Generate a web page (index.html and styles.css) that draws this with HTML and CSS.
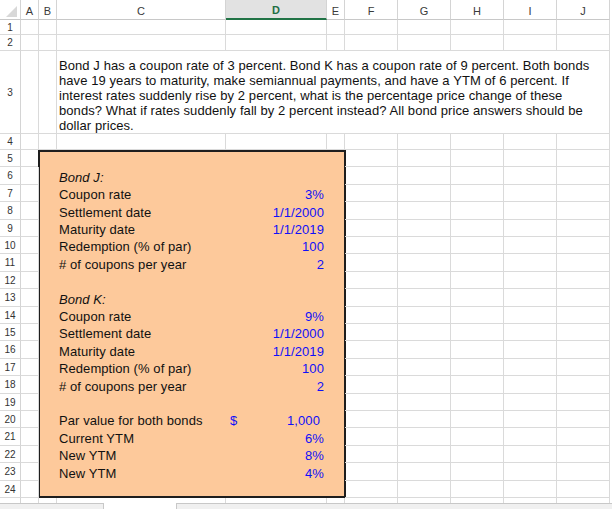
FILE: index.html
```html
<!DOCTYPE html>
<html>
<head>
<meta charset="utf-8">
<title>Bond problem</title>
<link rel="stylesheet" href="styles.css">
</head>
<body>
<div class="app">
  <div class="sheet">
    <div class="corner"><svg width="11" height="11" viewBox="0 0 11 11"><polygon points="11,0 11,11 0,11" fill="#d8d8d8"/></svg></div>
    <div class="ch">A</div><div class="ch">B</div><div class="ch">C</div><div class="ch sel">D</div><div class="ch">E</div><div class="ch">F</div><div class="ch">G</div><div class="ch">H</div><div class="ch">I</div><div class="ch">J</div>

    <div class="rh">1</div><div class="c"></div><div class="c"></div><div class="c"></div><div class="c"></div><div class="c"></div><div class="c"></div><div class="c"></div><div class="c"></div><div class="c"></div><div class="c"></div>
    <div class="rh">2</div><div class="c"></div><div class="c"></div><div class="c"></div><div class="c"></div><div class="c"></div><div class="c"></div><div class="c"></div><div class="c"></div><div class="c"></div><div class="c"></div>
    <div class="rh">3</div><div class="c"></div><div class="c"></div>
    <div class="c merged">
      <span>Bond J has a coupon rate of 3 percent. Bond K has a coupon rate of 9 percent. Both bonds</span>
      <span>have 19 years to maturity, make semiannual payments, and have a YTM of 6 percent. If</span>
      <span>interest rates suddenly rise by 2 percent, what is the percentage price change of these</span>
      <span>bonds? What if rates suddenly fall by 2 percent instead? All bond price answers should be</span>
      <span>dollar prices.</span>
    </div>
    <div class="rh">4</div><div class="c"></div><div class="c"></div><div class="c"></div><div class="c"></div><div class="c"></div><div class="c"></div><div class="c"></div><div class="c"></div><div class="c"></div><div class="c"></div>

    <div class="rh">5</div><div class="c"></div>
    <div class="box">
      <div class="row"></div>
      <div class="row"><span class="lab it">Bond J:</span></div>
      <div class="row"><span class="lab">Coupon rate</span><span class="val">3%</span></div>
      <div class="row"><span class="lab">Settlement date</span><span class="val">1/1/2000</span></div>
      <div class="row"><span class="lab">Maturity date</span><span class="val">1/1/2019</span></div>
      <div class="row"><span class="lab">Redemption (% of par)</span><span class="val">100</span></div>
      <div class="row"><span class="lab"># of coupons per year</span><span class="val">2</span></div>
      <div class="row"></div>
      <div class="row"><span class="lab it">Bond K:</span></div>
      <div class="row"><span class="lab">Coupon rate</span><span class="val">9%</span></div>
      <div class="row"><span class="lab">Settlement date</span><span class="val">1/1/2000</span></div>
      <div class="row"><span class="lab">Maturity date</span><span class="val">1/1/2019</span></div>
      <div class="row"><span class="lab">Redemption (% of par)</span><span class="val">100</span></div>
      <div class="row"><span class="lab"># of coupons per year</span><span class="val">2</span></div>
      <div class="row"></div>
      <div class="row"><span class="lab">Par value for both bonds</span><span class="val acct"><span>$</span><span>1,000</span></span></div>
      <div class="row"><span class="lab">Current YTM</span><span class="val">6%</span></div>
      <div class="row"><span class="lab">New YTM</span><span class="val">8%</span></div>
      <div class="row"><span class="lab">New YTM</span><span class="val">4%</span></div>
      <div class="row"></div>
    </div>
    <div class="c"></div><div class="c"></div><div class="c"></div><div class="c"></div><div class="c"></div>

    <div class="rh">6</div><div class="c"></div><div class="c"></div><div class="c"></div><div class="c"></div><div class="c"></div><div class="c"></div>
    <div class="rh">7</div><div class="c"></div><div class="c"></div><div class="c"></div><div class="c"></div><div class="c"></div><div class="c"></div>
    <div class="rh">8</div><div class="c"></div><div class="c"></div><div class="c"></div><div class="c"></div><div class="c"></div><div class="c"></div>
    <div class="rh">9</div><div class="c"></div><div class="c"></div><div class="c"></div><div class="c"></div><div class="c"></div><div class="c"></div>
    <div class="rh">10</div><div class="c"></div><div class="c"></div><div class="c"></div><div class="c"></div><div class="c"></div><div class="c"></div>
    <div class="rh">11</div><div class="c"></div><div class="c"></div><div class="c"></div><div class="c"></div><div class="c"></div><div class="c"></div>
    <div class="rh">12</div><div class="c"></div><div class="c"></div><div class="c"></div><div class="c"></div><div class="c"></div><div class="c"></div>
    <div class="rh">13</div><div class="c"></div><div class="c"></div><div class="c"></div><div class="c"></div><div class="c"></div><div class="c"></div>
    <div class="rh">14</div><div class="c"></div><div class="c"></div><div class="c"></div><div class="c"></div><div class="c"></div><div class="c"></div>
    <div class="rh">15</div><div class="c"></div><div class="c"></div><div class="c"></div><div class="c"></div><div class="c"></div><div class="c"></div>
    <div class="rh">16</div><div class="c"></div><div class="c"></div><div class="c"></div><div class="c"></div><div class="c"></div><div class="c"></div>
    <div class="rh">17</div><div class="c"></div><div class="c"></div><div class="c"></div><div class="c"></div><div class="c"></div><div class="c"></div>
    <div class="rh">18</div><div class="c"></div><div class="c"></div><div class="c"></div><div class="c"></div><div class="c"></div><div class="c"></div>
    <div class="rh">19</div><div class="c"></div><div class="c"></div><div class="c"></div><div class="c"></div><div class="c"></div><div class="c"></div>
    <div class="rh">20</div><div class="c"></div><div class="c"></div><div class="c"></div><div class="c"></div><div class="c"></div><div class="c"></div>
    <div class="rh">21</div><div class="c"></div><div class="c"></div><div class="c"></div><div class="c"></div><div class="c"></div><div class="c"></div>
    <div class="rh">22</div><div class="c"></div><div class="c"></div><div class="c"></div><div class="c"></div><div class="c"></div><div class="c"></div>
    <div class="rh">23</div><div class="c"></div><div class="c"></div><div class="c"></div><div class="c"></div><div class="c"></div><div class="c"></div>
    <div class="rh">24</div><div class="c"></div><div class="c"></div><div class="c"></div><div class="c"></div><div class="c"></div><div class="c"></div>
    <div class="rh"></div><div class="c"></div><div class="c"></div><div class="c"></div><div class="c"></div><div class="c"></div><div class="c"></div><div class="c"></div><div class="c"></div><div class="c"></div><div class="c"></div>
  </div>
  <div class="tabs"><div class="t1"></div><div class="t2"></div><div class="t3"></div></div>
</div>
</body>
</html>
```
FILE: styles.css
```css
* { box-sizing: border-box; margin: 0; padding: 0; }
html, body { width: 612px; height: 509px; overflow: hidden; background: #fff; }
body { font-family: "Liberation Sans", Arial, sans-serif; color: #000; }

.app { display: flex; flex-direction: column; height: 509px; }

.sheet {
  height: 503px;
  overflow: hidden;
  display: grid;
  grid-template-columns: 21px 18px 18px 169px 101px 18px 53px 53px 53px 53px 53px;
  grid-template-rows: 20px 15px 16px 83px 16px
    17px 18px 17px 18px 17px 17px 18px 17px 18px 17px
    17px 18px 17px 18px 17px 17px 18px 17px 18px 17px
    20px;
}

.c { border-right: 1px solid #dadada; border-bottom: 1px solid #dadada; }

.corner {
  border-right: 1px solid #d4d4d4;
  border-bottom: 1px solid #c8c8c8;
  display: flex;
  align-items: flex-end;
  justify-content: flex-end;
  padding: 0 3px 2px 0;
}
.corner svg { display: block; }

.ch {
  border-right: 1px solid #d4d4d4;
  border-bottom: 1px solid #c8c8c8;
  font-size: 11px;
  color: #3a3a3a;
  display: flex;
  align-items: center;
  justify-content: center;
  padding-top: 2px;
}
.ch.sel {
  background: #e2e2e2;
  border-bottom: 2px solid #217346;
  color: #1f6e43;
  font-weight: bold;
}

.rh {
  border-right: 1px solid #d4d4d4;
  border-bottom: 1px solid #dadada;
  font-size: 10px;
  color: #333;
  display: flex;
  align-items: center;
  justify-content: center;
}

.merged {
  grid-column: span 8;
  display: flex;
  flex-direction: column;
  justify-content: flex-end;
  padding-left: 2px;
  font-size: 13px;
  line-height: 15px;
  letter-spacing: 0.08px;
  white-space: nowrap;
  color: #111;
}

.box {
  grid-column: span 4;
  grid-row: span 20;
  margin: 0 -1px;
  border: 2px solid #1e1e1e;
  background: #fdc99b;
  display: grid;
  grid-template-rows: 15px 18px 17px 18px 17px 17px 18px 17px 18px 17px 17px 18px 17px 18px 17px 17px 18px 17px 18px 1fr;
}

.row {
  display: flex;
  align-items: flex-end;
  padding-left: 19px;
  font-size: 13px;
  line-height: 15px;
  letter-spacing: 0.08px;
  color: #111;
}
.lab { width: 167px; white-space: nowrap; }
.it { font-style: italic; }
.val {
  width: 101px;
  padding-right: 3px;
  text-align: right;
  color: #1010f8;
  white-space: nowrap;
}
.val.acct {
  display: flex;
  justify-content: space-between;
  padding-left: 4px;
  padding-right: 7px;
}

.tabs { flex: 1; display: flex; background: #f0f0f0; }
.t1 { width: 104px; border-top: 1px solid #c8c8c8; border-right: 1px solid #c8c8c8; }
.t2 { width: 72px; background: #fff; }
.t3 { flex: 1; border-top: 1px solid #c8c8c8; border-left: 1px solid #c8c8c8; }
```
